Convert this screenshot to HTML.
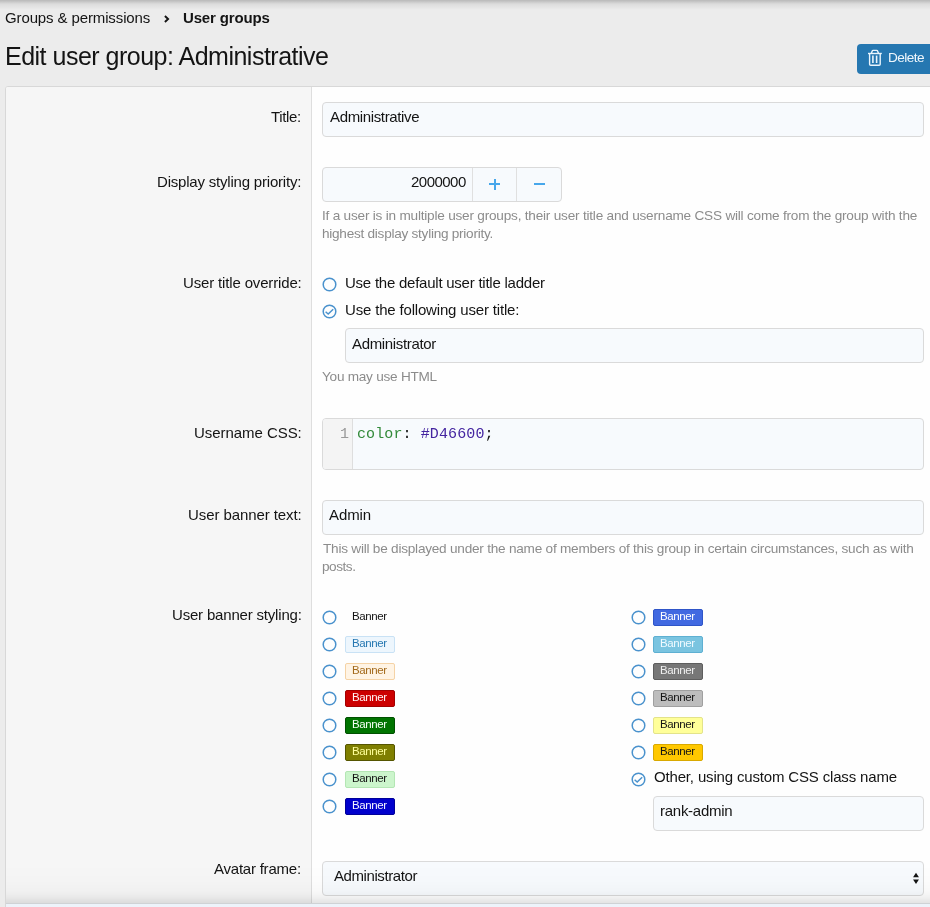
<!DOCTYPE html>
<html><head><meta charset="utf-8"><style>
html,body{margin:0;padding:0;width:930px;height:907px;overflow:hidden;background:#ececec;}
body{position:relative;font-family:"Liberation Sans", sans-serif;}
.t{position:absolute;white-space:nowrap;will-change:transform;}
.r{position:absolute;}
</style></head><body>
<div class="r" style="left:0px;top:0px;width:930px;height:10px;background:linear-gradient(to bottom, rgba(0,0,0,0.22), rgba(0,0,0,0.07) 40%, rgba(0,0,0,0));"></div>
<div class="t" style="left:4.70px;top:8.80px;font-size:15px;line-height:18px;color:#141414;font-weight:normal;font-family:'Liberation Sans';letter-spacing:-0.119px;">Groups &amp; permissions</div>
<svg class="r" style="left:160px;top:11px" width="14" height="16" viewBox="0 0 14 16"><path d="M4.9 5.0 L8.1 8.0 L4.9 11.0" fill="none" stroke="#141414" stroke-width="1.9" stroke-linecap="butt" stroke-linejoin="miter"/></svg>
<div class="t" style="left:182.90px;top:8.80px;font-size:15px;line-height:18px;color:#141414;font-weight:bold;font-family:'Liberation Sans';letter-spacing:-0.161px;">User groups</div>
<div class="t" style="left:4.90px;top:41.34px;font-size:25px;line-height:30px;color:#141414;font-weight:normal;font-family:'Liberation Sans';letter-spacing:-0.504px;">Edit user group: Administrative</div>
<div class="r" style="left:857px;top:44px;width:90px;height:30px;background:#2577b1;border-radius:4px;"></div>
<svg class="r" style="left:866px;top:49px" width="18" height="19" viewBox="0 0 18 19"><g fill="none" stroke="#eaf5fd" stroke-width="1.4" stroke-linejoin="round"><path d="M2 4.5 H15.8"/><path d="M5.3 4.5 L6.1 2.2 Q6.4 1.4 7.2 1.4 H10.6 Q11.4 1.4 11.7 2.2 L12.5 4.5"/><path d="M3.6 4.5 V15.2 Q3.6 16.3 4.7 16.3 H13.1 Q14.2 16.3 14.2 15.2 V4.5"/></g><g stroke="#eaf5fd" stroke-width="1.6"><path d="M6.9 6.6 V14"/><path d="M10.6 6.6 V14"/></g></svg>
<div class="t" style="left:887.70px;top:50.29px;font-size:13.6px;line-height:16px;color:#eef6fc;font-weight:normal;font-family:'Liberation Sans';letter-spacing:-0.527px;">Delete</div>
<div class="r" style="left:5px;top:86px;width:940px;height:830px;background:#fefefe;border:1px solid #d8d8d8;border-radius:3px;box-sizing:border-box;"></div>
<div class="r" style="left:6px;top:87px;width:305px;height:830px;background:#f6f6f6;border-right:1px solid #dedede;border-top-left-radius:2px;"></div>
<div class="t" style="left:271.30px;top:107.80px;font-size:15px;line-height:18px;color:#141414;font-weight:normal;font-family:'Liberation Sans';letter-spacing:-0.356px;">Title:</div>
<div class="r" style="left:322px;top:102px;width:602px;height:35px;background:#f7fafd;border:1px solid #dadada;border-radius:4px;box-sizing:border-box;"></div>
<div class="t" style="left:329.50px;top:107.80px;font-size:15px;line-height:18px;color:#141414;font-weight:normal;font-family:'Liberation Sans';letter-spacing:-0.358px;">Administrative</div>
<div class="t" style="left:157.06px;top:172.80px;font-size:15px;line-height:18px;color:#141414;font-weight:normal;font-family:'Liberation Sans';letter-spacing:-0.200px;">Display styling priority:</div>
<div class="r" style="left:322px;top:167px;width:240px;height:35px;background:#f7fafd;border:1px solid #dadada;border-radius:4px;box-sizing:border-box;"></div>
<div class="r" style="left:472px;top:168px;width:1px;height:33px;background:#e0e0e0;"></div>
<div class="r" style="left:516px;top:168px;width:1px;height:33px;background:#e0e0e0;"></div>
<div class="t" style="left:410.60px;top:172.80px;font-size:15px;line-height:18px;color:#141414;font-weight:normal;font-family:'Liberation Sans';letter-spacing:-0.526px;">2000000</div>
<div class="r" style="left:489px;top:183.3px;width:11px;height:2px;background:#47a7eb;"></div>
<div class="r" style="left:493.5px;top:178.8px;width:2px;height:11px;background:#47a7eb;"></div>
<div class="r" style="left:534px;top:183.3px;width:11px;height:2px;background:#47a7eb;"></div>
<div class="t" style="left:322.00px;top:208.29px;font-size:13.6px;line-height:16px;color:#8c8c8c;font-weight:normal;font-family:'Liberation Sans';letter-spacing:-0.211px;">If a user is in multiple user groups, their user title and username CSS will come from the group with the</div>
<div class="t" style="left:322.20px;top:226.29px;font-size:13.6px;line-height:16px;color:#8c8c8c;font-weight:normal;font-family:'Liberation Sans';letter-spacing:-0.259px;">highest display styling priority.</div>
<div class="t" style="left:182.70px;top:273.80px;font-size:15px;line-height:18px;color:#141414;font-weight:normal;font-family:'Liberation Sans';letter-spacing:-0.155px;">User title override:</div>
<svg class="r" style="left:321.5px;top:276.5px" width="15" height="15" viewBox="0 0 15 15"><circle cx="7.5" cy="7.5" r="6.3" fill="#fefefe" stroke="#4a92cd" stroke-width="1.5"/></svg>
<div class="t" style="left:345.00px;top:273.80px;font-size:15px;line-height:18px;color:#141414;font-weight:normal;font-family:'Liberation Sans';letter-spacing:-0.238px;">Use the default user title ladder</div>
<svg class="r" style="left:321.5px;top:303.5px" width="15" height="15" viewBox="0 0 15 15"><circle cx="7.5" cy="7.5" r="6.3" fill="#fefefe" stroke="#4a92cd" stroke-width="1.5"/><path d="M3.6 7.8 L6.2 10.0 L11.2 5.3" fill="none" stroke="#4a92cd" stroke-width="1.5"/></svg>
<div class="t" style="left:345.00px;top:300.80px;font-size:15px;line-height:18px;color:#141414;font-weight:normal;font-family:'Liberation Sans';letter-spacing:-0.174px;">Use the following user title:</div>
<div class="r" style="left:345px;top:328px;width:579px;height:35px;background:#f7fafd;border:1px solid #dadada;border-radius:4px;box-sizing:border-box;"></div>
<div class="t" style="left:352.30px;top:334.80px;font-size:15px;line-height:18px;color:#141414;font-weight:normal;font-family:'Liberation Sans';letter-spacing:-0.339px;">Administrator</div>
<div class="t" style="left:322.00px;top:369.29px;font-size:13.6px;line-height:16px;color:#8c8c8c;font-weight:normal;font-family:'Liberation Sans';letter-spacing:-0.247px;">You may use HTML</div>
<div class="t" style="left:193.70px;top:423.80px;font-size:15px;line-height:18px;color:#141414;font-weight:normal;font-family:'Liberation Sans';letter-spacing:-0.050px;">Username CSS:</div>
<div class="r" style="left:322px;top:418px;width:602px;height:52px;background:#f7fafd;border:1px solid #dadada;border-radius:4px;box-sizing:border-box;"></div>
<div class="r" style="left:323px;top:419px;width:29px;height:50px;background:#f4f4f4;border-right:1px solid #dedede;border-top-left-radius:3px;border-bottom-left-radius:3px;"></div>
<div class="t" style="left:340.00px;top:425.80px;font-size:15px;line-height:18px;color:#999999;font-weight:normal;font-family:'Liberation Mono';letter-spacing:0.000px;">1</div>
<div class="t" style="left:357.00px;top:425.80px;font-size:15px;line-height:18px;color:#141414;font-weight:normal;font-family:'Liberation Mono';letter-spacing:0.106px;"><span style="color:#338a3a">color</span>: <span style="color:#4424a0">#D46600</span>;</div>
<div class="t" style="left:187.70px;top:505.80px;font-size:15px;line-height:18px;color:#141414;font-weight:normal;font-family:'Liberation Sans';letter-spacing:-0.081px;">User banner text:</div>
<div class="r" style="left:322px;top:500px;width:602px;height:35px;background:#f7fafd;border:1px solid #dadada;border-radius:4px;box-sizing:border-box;"></div>
<div class="t" style="left:329.20px;top:505.80px;font-size:15px;line-height:18px;color:#141414;font-weight:normal;font-family:'Liberation Sans';letter-spacing:-0.094px;">Admin</div>
<div class="t" style="left:323.00px;top:541.29px;font-size:13.6px;line-height:16px;color:#8c8c8c;font-weight:normal;font-family:'Liberation Sans';letter-spacing:-0.227px;">This will be displayed under the name of members of this group in certain circumstances, such as with</div>
<div class="t" style="left:322.20px;top:559.29px;font-size:13.6px;line-height:16px;color:#8c8c8c;font-weight:normal;font-family:'Liberation Sans';letter-spacing:-0.458px;">posts.</div>
<div class="t" style="left:171.60px;top:605.80px;font-size:15px;line-height:18px;color:#141414;font-weight:normal;font-family:'Liberation Sans';letter-spacing:-0.186px;">User banner styling:</div>
<svg class="r" style="left:321.5px;top:609.5px" width="15" height="15" viewBox="0 0 15 15"><circle cx="7.5" cy="7.5" r="6.3" fill="#fefefe" stroke="#4a92cd" stroke-width="1.5"/></svg>
<div class="r" style="left:345px;top:609px;width:50px;height:17px;background:transparent;border:1px solid transparent;border-radius:2px;box-sizing:border-box;"></div>
<div class="t" style="left:351.80px;top:609.02px;font-size:11.5px;line-height:14px;color:#141414;font-weight:normal;font-family:'Liberation Sans';letter-spacing:-0.391px;">Banner</div>
<svg class="r" style="left:321.5px;top:636.5px" width="15" height="15" viewBox="0 0 15 15"><circle cx="7.5" cy="7.5" r="6.3" fill="#fefefe" stroke="#4a92cd" stroke-width="1.5"/></svg>
<div class="r" style="left:345px;top:636px;width:50px;height:17px;background:#edf6fd;border:1px solid #c9e2f5;border-radius:2px;box-sizing:border-box;"></div>
<div class="t" style="left:351.80px;top:636.02px;font-size:11.5px;line-height:14px;color:#2577b1;font-weight:normal;font-family:'Liberation Sans';letter-spacing:-0.391px;">Banner</div>
<svg class="r" style="left:321.5px;top:663.5px" width="15" height="15" viewBox="0 0 15 15"><circle cx="7.5" cy="7.5" r="6.3" fill="#fefefe" stroke="#4a92cd" stroke-width="1.5"/></svg>
<div class="r" style="left:345px;top:663px;width:50px;height:17px;background:#fff4e5;border:1px solid #f5d3a6;border-radius:2px;box-sizing:border-box;"></div>
<div class="t" style="left:351.80px;top:663.02px;font-size:11.5px;line-height:14px;color:#a36a1c;font-weight:normal;font-family:'Liberation Sans';letter-spacing:-0.391px;">Banner</div>
<svg class="r" style="left:321.5px;top:690.5px" width="15" height="15" viewBox="0 0 15 15"><circle cx="7.5" cy="7.5" r="6.3" fill="#fefefe" stroke="#4a92cd" stroke-width="1.5"/></svg>
<div class="r" style="left:345px;top:690px;width:50px;height:17px;background:#cc0000;border:1px solid #a30000;border-radius:2px;box-sizing:border-box;"></div>
<div class="t" style="left:351.80px;top:690.02px;font-size:11.5px;line-height:14px;color:#fff4f4;font-weight:normal;font-family:'Liberation Sans';letter-spacing:-0.391px;">Banner</div>
<svg class="r" style="left:321.5px;top:717.5px" width="15" height="15" viewBox="0 0 15 15"><circle cx="7.5" cy="7.5" r="6.3" fill="#fefefe" stroke="#4a92cd" stroke-width="1.5"/></svg>
<div class="r" style="left:345px;top:717px;width:50px;height:17px;background:#007400;border:1px solid #005000;border-radius:2px;box-sizing:border-box;"></div>
<div class="t" style="left:351.80px;top:717.02px;font-size:11.5px;line-height:14px;color:#f4fff4;font-weight:normal;font-family:'Liberation Sans';letter-spacing:-0.391px;">Banner</div>
<svg class="r" style="left:321.5px;top:744.5px" width="15" height="15" viewBox="0 0 15 15"><circle cx="7.5" cy="7.5" r="6.3" fill="#fefefe" stroke="#4a92cd" stroke-width="1.5"/></svg>
<div class="r" style="left:345px;top:744px;width:50px;height:17px;background:#7f7f00;border:1px solid #555500;border-radius:2px;box-sizing:border-box;"></div>
<div class="t" style="left:351.80px;top:744.02px;font-size:11.5px;line-height:14px;color:#ffff99;font-weight:normal;font-family:'Liberation Sans';letter-spacing:-0.391px;">Banner</div>
<svg class="r" style="left:321.5px;top:771.5px" width="15" height="15" viewBox="0 0 15 15"><circle cx="7.5" cy="7.5" r="6.3" fill="#fefefe" stroke="#4a92cd" stroke-width="1.5"/></svg>
<div class="r" style="left:345px;top:771px;width:50px;height:17px;background:#ccf5cc;border:1px solid #b4e6b4;border-radius:2px;box-sizing:border-box;"></div>
<div class="t" style="left:351.80px;top:771.02px;font-size:11.5px;line-height:14px;color:#141414;font-weight:normal;font-family:'Liberation Sans';letter-spacing:-0.391px;">Banner</div>
<svg class="r" style="left:321.5px;top:798.5px" width="15" height="15" viewBox="0 0 15 15"><circle cx="7.5" cy="7.5" r="6.3" fill="#fefefe" stroke="#4a92cd" stroke-width="1.5"/></svg>
<div class="r" style="left:345px;top:798px;width:50px;height:17px;background:#0000cc;border:1px solid #000099;border-radius:2px;box-sizing:border-box;"></div>
<div class="t" style="left:351.80px;top:798.02px;font-size:11.5px;line-height:14px;color:#f4f4ff;font-weight:normal;font-family:'Liberation Sans';letter-spacing:-0.391px;">Banner</div>
<svg class="r" style="left:630.5px;top:609.5px" width="15" height="15" viewBox="0 0 15 15"><circle cx="7.5" cy="7.5" r="6.3" fill="#fefefe" stroke="#4a92cd" stroke-width="1.5"/></svg>
<div class="r" style="left:653px;top:609px;width:50px;height:17px;background:#4169e1;border:1px solid #2f55c8;border-radius:2px;box-sizing:border-box;"></div>
<div class="t" style="left:659.80px;top:609.02px;font-size:11.5px;line-height:14px;color:#ffffff;font-weight:normal;font-family:'Liberation Sans';letter-spacing:-0.391px;">Banner</div>
<svg class="r" style="left:630.5px;top:636.5px" width="15" height="15" viewBox="0 0 15 15"><circle cx="7.5" cy="7.5" r="6.3" fill="#fefefe" stroke="#4a92cd" stroke-width="1.5"/></svg>
<div class="r" style="left:653px;top:636px;width:50px;height:17px;background:#7ac4e0;border:1px solid #5eb0d2;border-radius:2px;box-sizing:border-box;"></div>
<div class="t" style="left:659.80px;top:636.02px;font-size:11.5px;line-height:14px;color:#f0faff;font-weight:normal;font-family:'Liberation Sans';letter-spacing:-0.391px;">Banner</div>
<svg class="r" style="left:630.5px;top:663.5px" width="15" height="15" viewBox="0 0 15 15"><circle cx="7.5" cy="7.5" r="6.3" fill="#fefefe" stroke="#4a92cd" stroke-width="1.5"/></svg>
<div class="r" style="left:653px;top:663px;width:50px;height:17px;background:#777777;border:1px solid #5e5e5e;border-radius:2px;box-sizing:border-box;"></div>
<div class="t" style="left:659.80px;top:663.02px;font-size:11.5px;line-height:14px;color:#f0f0f0;font-weight:normal;font-family:'Liberation Sans';letter-spacing:-0.391px;">Banner</div>
<svg class="r" style="left:630.5px;top:690.5px" width="15" height="15" viewBox="0 0 15 15"><circle cx="7.5" cy="7.5" r="6.3" fill="#fefefe" stroke="#4a92cd" stroke-width="1.5"/></svg>
<div class="r" style="left:653px;top:690px;width:50px;height:17px;background:#bdbdbd;border:1px solid #a0a0a0;border-radius:2px;box-sizing:border-box;"></div>
<div class="t" style="left:659.80px;top:690.02px;font-size:11.5px;line-height:14px;color:#141414;font-weight:normal;font-family:'Liberation Sans';letter-spacing:-0.391px;">Banner</div>
<svg class="r" style="left:630.5px;top:717.5px" width="15" height="15" viewBox="0 0 15 15"><circle cx="7.5" cy="7.5" r="6.3" fill="#fefefe" stroke="#4a92cd" stroke-width="1.5"/></svg>
<div class="r" style="left:653px;top:717px;width:50px;height:17px;background:#ffff99;border:1px solid #e3e38a;border-radius:2px;box-sizing:border-box;"></div>
<div class="t" style="left:659.80px;top:717.02px;font-size:11.5px;line-height:14px;color:#141414;font-weight:normal;font-family:'Liberation Sans';letter-spacing:-0.391px;">Banner</div>
<svg class="r" style="left:630.5px;top:744.5px" width="15" height="15" viewBox="0 0 15 15"><circle cx="7.5" cy="7.5" r="6.3" fill="#fefefe" stroke="#4a92cd" stroke-width="1.5"/></svg>
<div class="r" style="left:653px;top:744px;width:50px;height:17px;background:#ffc800;border:1px solid #d9a900;border-radius:2px;box-sizing:border-box;"></div>
<div class="t" style="left:659.80px;top:744.02px;font-size:11.5px;line-height:14px;color:#141414;font-weight:normal;font-family:'Liberation Sans';letter-spacing:-0.391px;">Banner</div>
<svg class="r" style="left:630.5px;top:771.5px" width="15" height="15" viewBox="0 0 15 15"><circle cx="7.5" cy="7.5" r="6.3" fill="#fefefe" stroke="#4a92cd" stroke-width="1.5"/><path d="M3.6 7.8 L6.2 10.0 L11.2 5.3" fill="none" stroke="#4a92cd" stroke-width="1.5"/></svg>
<div class="t" style="left:653.50px;top:767.80px;font-size:15px;line-height:18px;color:#141414;font-weight:normal;font-family:'Liberation Sans';letter-spacing:-0.163px;">Other, using custom CSS class name</div>
<div class="r" style="left:653px;top:796px;width:271px;height:35px;background:#f7fafd;border:1px solid #dadada;border-radius:4px;box-sizing:border-box;"></div>
<div class="t" style="left:659.50px;top:801.80px;font-size:15px;line-height:18px;color:#141414;font-weight:normal;font-family:'Liberation Sans';letter-spacing:-0.265px;">rank-admin</div>
<div class="t" style="left:214.40px;top:859.80px;font-size:15px;line-height:18px;color:#141414;font-weight:normal;font-family:'Liberation Sans';letter-spacing:-0.224px;">Avatar frame:</div>
<div class="r" style="left:322px;top:861px;width:602px;height:35px;background:#f7fafd;border:1px solid #dadada;border-radius:4px;box-sizing:border-box;"></div>
<div class="t" style="left:333.90px;top:866.80px;font-size:15px;line-height:18px;color:#141414;font-weight:normal;font-family:'Liberation Sans';letter-spacing:-0.414px;">Administrator</div>
<svg class="r" style="left:909.5px;top:869px" width="12" height="20" viewBox="0 0 12 20"><path d="M6 3.7 L8.95 8.2 H3.05 Z M6 14.9 L8.95 10.4 H3.05 Z" fill="#141414"/></svg>
<div class="r" style="left:6px;top:864px;width:924px;height:39px;background:linear-gradient(to bottom, rgba(0,0,0,0), rgba(0,0,0,0.006) 41%, rgba(0,0,0,0.018) 67%, rgba(0,0,0,0.045) 82%, rgba(0,0,0,0.10));"></div>
<div class="r" style="left:6px;top:903px;width:924px;height:1px;background:#cfd2d5;"></div>
<div class="r" style="left:6px;top:904px;width:924px;height:3px;background:#edf3fa;"></div>
</body></html>
